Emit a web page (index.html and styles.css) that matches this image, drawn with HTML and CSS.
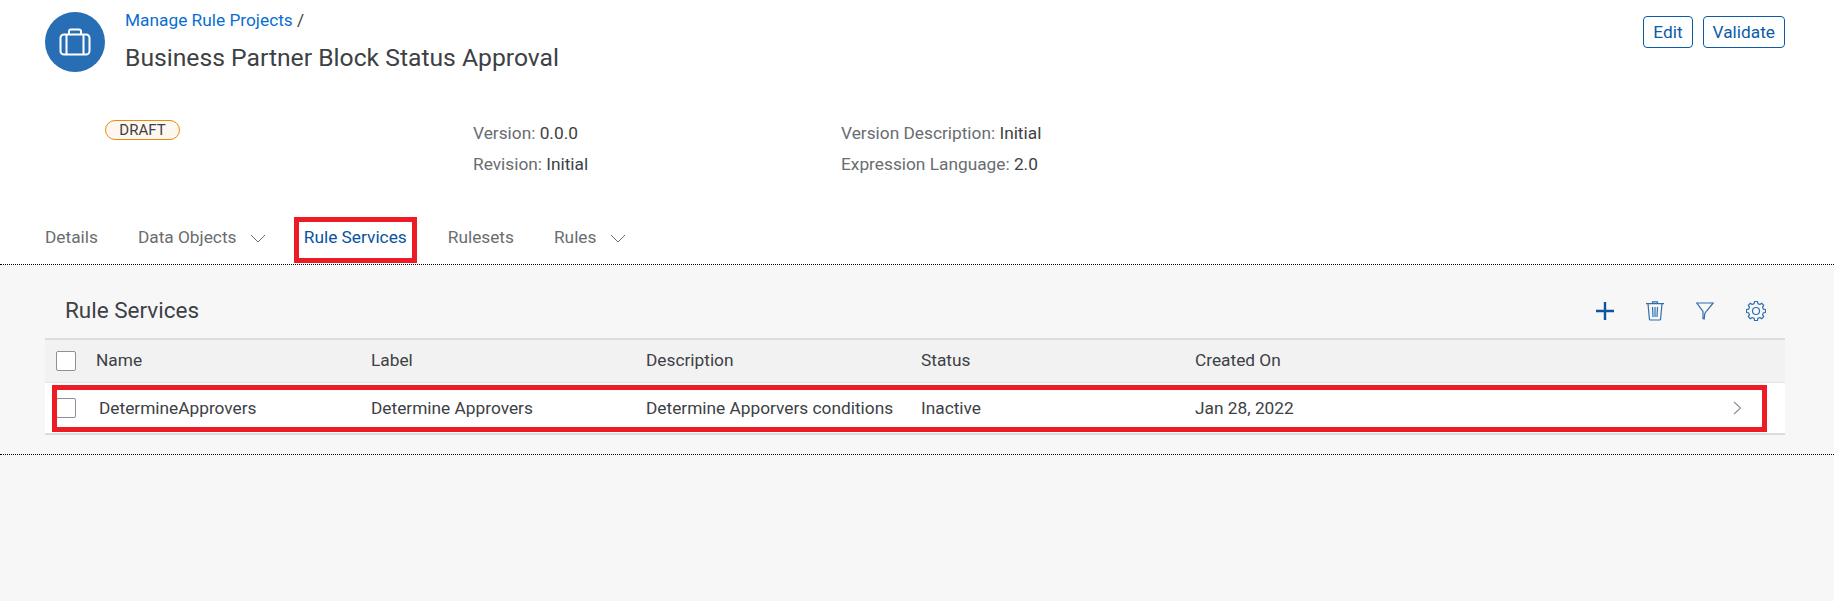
FILE: index.html
```html
<!DOCTYPE html>
<html lang="en">
<head>
  <meta charset="UTF-8">
  <title>Business Partner Block Status Approval</title>
  <link rel="stylesheet" href="styles.css">
</head>
<body>
<header class="page-header">
  <div class="top">
    <div class="avatar">
      <svg width="32" height="28" viewBox="0 0 32 28" fill="none" stroke="#fff" stroke-width="2">
        <rect x="1.5" y="6.5" width="29" height="20" rx="3.5"/>
        <path d="M10 6.5V3.5a2 2 0 0 1 2-2h8a2 2 0 0 1 2 2v3M7.5 6.5v20M24.5 6.5v20"/>
      </svg>
    </div>
    <div class="heading">
      <div class="crumb"><a href="#">Manage Rule Projects</a> /</div>
      <h1>Business Partner Block Status Approval</h1>
    </div>
    <div class="actions">
      <button>Edit</button>
      <button>Validate</button>
    </div>
  </div>
  <div class="meta">
    <div class="status-col"><span class="draft">DRAFT</span></div>
    <div class="meta-col">
      <div><span class="lbl">Version:</span> 0.0.0</div>
      <div><span class="lbl">Revision:</span> Initial</div>
    </div>
    <div class="meta-col">
      <div><span class="lbl">Version Description:</span> Initial</div>
      <div><span class="lbl">Expression Language:</span> 2.0</div>
    </div>
  </div>
  <nav class="tabs">
    <a href="#" class="tab tab-details">Details</a>
    <a href="#" class="tab tab-data">Data Objects
      <svg class="chev" width="16" height="9" viewBox="0 0 16 9" fill="none" stroke="#6a6d70"><path d="M1 1l7 7 7-7"/></svg>
    </a>
    <a href="#" class="tab tab-services active">Rule Services</a>
    <a href="#" class="tab tab-rulesets">Rulesets</a>
    <a href="#" class="tab tab-rules">Rules
      <svg class="chev" width="16" height="9" viewBox="0 0 16 9" fill="none" stroke="#6a6d70"><path d="M1 1l7 7 7-7"/></svg>
    </a>
  </nav>
</header>

<section class="content">
  <div class="toolbar">
    <h2>Rule Services</h2>
    <div class="tools">
      <svg width="18" height="18" viewBox="0 0 18 18" fill="none" stroke="#0a55a0" stroke-width="2.4"><path d="M9 0v18M0 9h18"/></svg>
      <svg width="18" height="20" viewBox="0 0 18 20" fill="none" stroke="#2f6fb0" stroke-width="1.2"><path d="M0 2.6h18M6.5 2.2V.9h5v1.3M2 2.8l1.4 15.2a1 1 0 0 0 1 1h9.200a1 1 0 0 0 1-1L16 2.800M6.500 6l.5 10M9 6v10M11.500 6l-.5 10"/></svg>
      <svg width="18" height="18" viewBox="0 0 18 18" fill="none" stroke="#2f6fb0" stroke-width="1.2"><path d="M.8 1h16.400L11 8.500 8.800 11.500 8.200 17 7 16.500V9.500z"/></svg>
      <svg width="20" height="20" viewBox="0 0 20 20" fill="none" stroke="#2f6fb0" stroke-width="1.2" stroke-linejoin="round"><circle cx="10" cy="10" r="3.5"/><path d="M17.37 8.16L19.48 8.5V11.5L17.37 11.84L16.51 13.91L17.77 15.64L15.64 17.77L13.91 16.51L11.84 17.37L11.5 19.48H8.5L8.16 17.37L6.09 16.51L4.36 17.77L2.23 15.64L3.49 13.91L2.63 11.84L.52 11.5V8.5L2.63 8.16L3.49 6.09L2.23 4.36L4.36 2.23L6.09 3.49L8.16 2.63L8.5 .52H11.5L11.84 2.63L13.91 3.49L15.64 2.23L17.77 4.36L16.51 6.09Z"/></svg>
    </div>
  </div>
  <div class="table">
    <div class="row head">
      <span class="check"></span>
      <span class="head-cell">Name</span>
      <span class="head-cell">Label</span>
      <span class="head-cell">Description</span>
      <span class="head-cell">Status</span>
      <span class="head-cell">Created On</span>
    </div>
    <div class="row item">
      <span class="check"></span>
      <span class="first">DetermineApprovers</span>
      <span>Determine Approvers</span>
      <span>Determine Apporvers conditions</span>
      <span>Inactive</span>
      <span>Jan 28, 2022</span>
      <svg class="go" width="9" height="14" viewBox="0 0 9 14" fill="none" stroke="#8c8c8c" stroke-width="1.100"><path d="M1 1l6.500 6L1 13"/></svg>
    </div>
  </div>
</section>
</body>
</html>
```

FILE: styles.css
```css
*, *::after { box-sizing: border-box; }
html, body { height: 100%; }
body { margin: 0; background: #f7f7f7; font-family: Roboto, "Liberation Sans", sans-serif; font-size: 17.3px; font-weight: 400; color: #3d4145; overflow: hidden; }
a { text-decoration: none; }

.page-header { background: #fff; height: 265px; border-bottom: 1px dotted #000; }
.top { display: flex; height: 119px; padding: 12px 49px 0 45px; }
.avatar { width: 60px; height: 60px; border-radius: 50%; background: #286eb4; display: flex; align-items: center; justify-content: center; }
.heading { margin-left: 20px; margin-top: -2px; flex: 1; }
.crumb { line-height: 20px; }
.crumb a { color: #0a6ed1; }
h1 { margin: 13px 0 0; font-size: 24.700px; line-height: 30px; font-weight: 400; }
.actions { display: flex; gap: 10px; margin-top: 4px; }
button { height: 32px; padding: 0 9px; background: #fff; border: 1px solid #0a5ca8; border-radius: 4px; color: #0a5ca8; font: 400 17.3px Roboto, sans-serif; }

.meta { display: flex; height: 62px; padding-left: 105px; }
.status-col { width: 368px; }
.draft { display: block; width: 75px; height: 20px; margin-top: 1px; border: 1px solid #e78c07; border-radius: 10px; background: #fef7f1; font-size: 15px; line-height: 18px; text-align: center; }
.meta-col { width: 368px; line-height: 31px; margin-top: -1px; }
.lbl { color: #6a6d70; }

.tabs { display: flex; height: 82px; padding: 46px 0 0 45px; }
.tab { position: relative; height: 20px; line-height: 20px; color: #6a6d70; }
.tab.active { color: #0854a0; }
.tab.active::after { content: ""; position: absolute; left: -10px; right: -10px; top: -10px; height: 46px; border: 5px solid #ed1c24; }
.tab-data { margin-left: 40px; }
.tab-services { margin-left: 38px; }
.tab-rulesets { margin-left: 41px; }
.tab-rules { margin-left: 40px; }
.chev { margin-left: 9px; }

.content { padding: 0 49px 0 45px; height: 190px; border-bottom: 1px dotted #000; }
.toolbar { display: flex; align-items: center; justify-content: space-between; height: 73px; padding: 18px 19px 0 20px; }
h2 { margin: 0 0 2px; font-size: 22.500px; font-weight: 400; }
.tools { display: flex; align-items: center; gap: 32px; }

.table { border-top: 2px solid #dcdcdc; }
.row { display: grid; grid-template-columns: 40px 275px 275px 275px 274px 1fr; align-items: center; padding-left: 11px; }
.head { height: 42px; background: #f2f2f2; }
.head-cell { margin-bottom: 3px; }
.item { position: relative; height: 53px; background: #fff; border-top: 1px solid #e5e5e5; border-bottom: 2px solid #dcdcdc; }
.item::after { content: ""; position: absolute; left: 7px; top: 2px; width: 1715px; height: 47px; border: 5px solid #ed1c24; }
.first { padding-left: 3px; }
.check { width: 20px; height: 20px; background: #fff; border: 1px solid #89919a; border-radius: 2px; }
.go { position: absolute; right: 43px; top: 18px; }
```
